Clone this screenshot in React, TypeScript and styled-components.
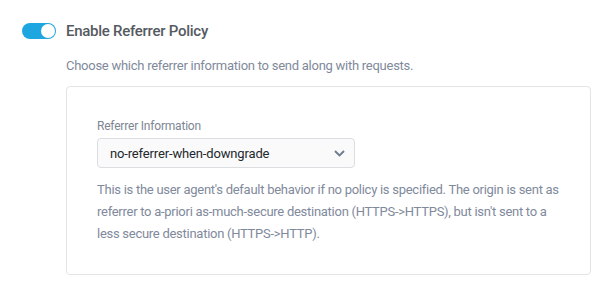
import React, { useState } from "react";
import styled, { createGlobalStyle } from "styled-components";

const Global = createGlobalStyle`
  html, body { margin: 0; padding: 0; background: #fff; }
  body { font-family: Roboto, "Noto Sans", sans-serif; -webkit-font-smoothing: antialiased; }
`;

const Page = styled.div`
  padding: 21px 19px 0 22px;
  width: 610px;
  box-sizing: border-box;
`;

const Header = styled.div`
  display: flex;
  align-items: center;
  gap: 10px;
`;

const Toggle = styled.button<{ $on: boolean }>`
  position: relative;
  width: 34px;
  height: 16px;
  border-radius: 8px;
  border: none;
  padding: 0;
  background: ${(p) => (p.$on ? "#1ea6e0" : "#ccc")};
  cursor: pointer;
  flex: none;
`;

const Knob = styled.span<{ $on: boolean }>`
  position: absolute;
  top: 1px;
  left: ${(p) => (p.$on ? "19px" : "1px")};
  width: 14px;
  height: 14px;
  border-radius: 50%;
  background: #fff;
  box-sizing: border-box;
`;

const Title = styled.h2`
  margin: 0;
  font-size: 15px;
  font-weight: 500;
  letter-spacing: -0.27px;
  color: #555a61;
  line-height: 20px;
`;

const Body = styled.div`
  padding-left: 44px;
`;

const Desc = styled.p`
  margin: 16px 0 0;
  font-size: 13px;
  letter-spacing: -0.26px;
  color: #7f8a9c;
  line-height: 18px;
`;

const Panel = styled.div`
  margin-top: 11px;
  width: 525px;
  box-sizing: border-box;
  border: 1px solid #e3e4e6;
  border-radius: 4px;
  padding: 31px 30px 29px 30px;
`;

const Label = styled.label`
  display: block;
  font-size: 12px;
  letter-spacing: -0.2px;
  color: #7d8593;
  line-height: 16px;
  margin-bottom: 4px;
`;

const Select = styled.div`
  width: 258px;
  height: 30px;
  box-sizing: border-box;
  border: 1px solid #dcdde0;
  border-radius: 4px;
  background: #fafafa;
  display: flex;
  align-items: center;
  justify-content: space-between;
  padding: 0 9px 0 12px;
  font-size: 13px;
  letter-spacing: -0.15px;
  color: #23282d;
`;

const Help = styled.p`
  margin: 11px 0 0;
  font-size: 13px;
  letter-spacing: -0.27px;
  line-height: 22px;
  color: #7f8a9c;
`;

export default function App() {
  const [on, setOn] = useState(true);
  return (
    <>
      <Global />
      <Page>
        <Header>
          <Toggle $on={on} onClick={() => setOn(!on)} aria-label="toggle">
            <Knob $on={on} />
          </Toggle>
          <Title>Enable Referrer Policy</Title>
        </Header>
        <Body>
          <Desc>Choose which referrer information to send along with requests.</Desc>
          <Panel>
            <Label>Referrer Information</Label>
            <Select>
              <span>no-referrer-when-downgrade</span>
              <svg width="11" height="7" viewBox="0 0 11 7">
                <path d="M1 1 L5.5 5.5 L10 1" fill="none" stroke="#6f7b8f" strokeWidth="1.9" />
              </svg>
            </Select>
            <Help>
              This is the user agent's default behavior if no policy is specified. The origin is sent as
              referrer to a-priori as-much-secure destination (HTTPS-&gt;HTTPS), but isn't sent to a
              less secure destination (HTTPS-&gt;HTTP).
            </Help>
          </Panel>
        </Body>
      </Page>
    </>
  );
}
